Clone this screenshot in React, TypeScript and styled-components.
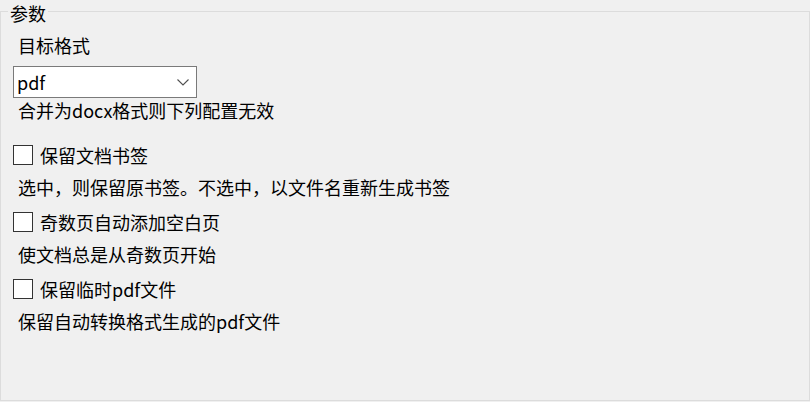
import React from 'react';
import styled, { createGlobalStyle } from 'styled-components';

const GlobalStyle = createGlobalStyle`
	html, body {
		margin: 0;
		padding: 0;
		background: #f0f0f0;
		overflow: hidden;
	}
	body {
		font-family: 'Noto Sans CJK SC', 'Noto Sans', sans-serif;
		font-size: 18px;
		color: #000;
	}
`;

const options = [
	{ label: '保留文档书签', desc: '选中，则保留原书签。不选中，以文件名重新生成书签' },
	{ label: '奇数页自动添加空白页', desc: '使文档总是从奇数页开始' },
	{ label: '保留临时pdf文件', desc: '保留自动转换格式生成的pdf文件' },
];

const App = () => {
	return (
		<>
			<GlobalStyle />
			<Page>
				<Title>参数</Title>
				<GroupBox>
					<FieldLabel>目标格式</FieldLabel>
					<Select>
						<span>pdf</span>
						<svg width="12" height="7" viewBox="0 0 12 7">
							<path d="M0.5 0.5 L6 6 L11.5 0.5" fill="none" stroke="#505050" strokeWidth="1.1" />
						</svg>
					</Select>
					<Hint>合并为docx格式则下列配置无效</Hint>
					{options.map((o) => (
						<Option key={o.label}>
							<CheckRow>
								<Box />
								<span>{o.label}</span>
							</CheckRow>
							<Hint>{o.desc}</Hint>
						</Option>
					))}
				</GroupBox>
			</Page>
		</>
	);
};

const Page = styled.div`
	position: relative;
	width: 810px;
	height: 402px;
	padding-top: 11px;
	box-sizing: border-box;
`;

const Title = styled.div`
	position: absolute;
	top: 0;
	left: 8px;
	padding: 0 2px;
	line-height: 26px;
	background: #f0f0f0;
`;

const GroupBox = styled.div`
	box-sizing: border-box;
	height: 390px;
	border: 1px solid #dcdcdc;
	display: flex;
	flex-direction: column;
	align-items: flex-start;
	padding: 21px 0 0 12px;
`;

const FieldLabel = styled.div`
	height: 24px;
	line-height: 24px;
	padding-left: 5px;
`;

const Select = styled.div`
	box-sizing: border-box;
	margin-top: 9px;
	width: 184px;
	height: 32px;
	background: #fff;
	border: 1px solid #7a7a7a;
	display: flex;
	align-items: center;
	justify-content: space-between;
	padding: 0 7px 0 3px;
	line-height: 24px;

	svg {
		margin-top: 1px;
	}
`;

const Hint = styled.div`
	height: 24px;
	line-height: 24px;
	padding-left: 5px;
	white-space: nowrap;
`;

const Option = styled.div`
	display: flex;
	flex-direction: column;
	gap: 8px;
	margin-top: 21px;

	& + & {
		margin-top: 11px;
	}
`;

const CheckRow = styled.div`
	display: flex;
	align-items: center;
	gap: 7px;
	height: 24px;
	line-height: 24px;
`;

const Box = styled.span`
	box-sizing: border-box;
	width: 20px;
	height: 20px;
	background: #fff;
	border: 1px solid #333;
`;

export default App;
